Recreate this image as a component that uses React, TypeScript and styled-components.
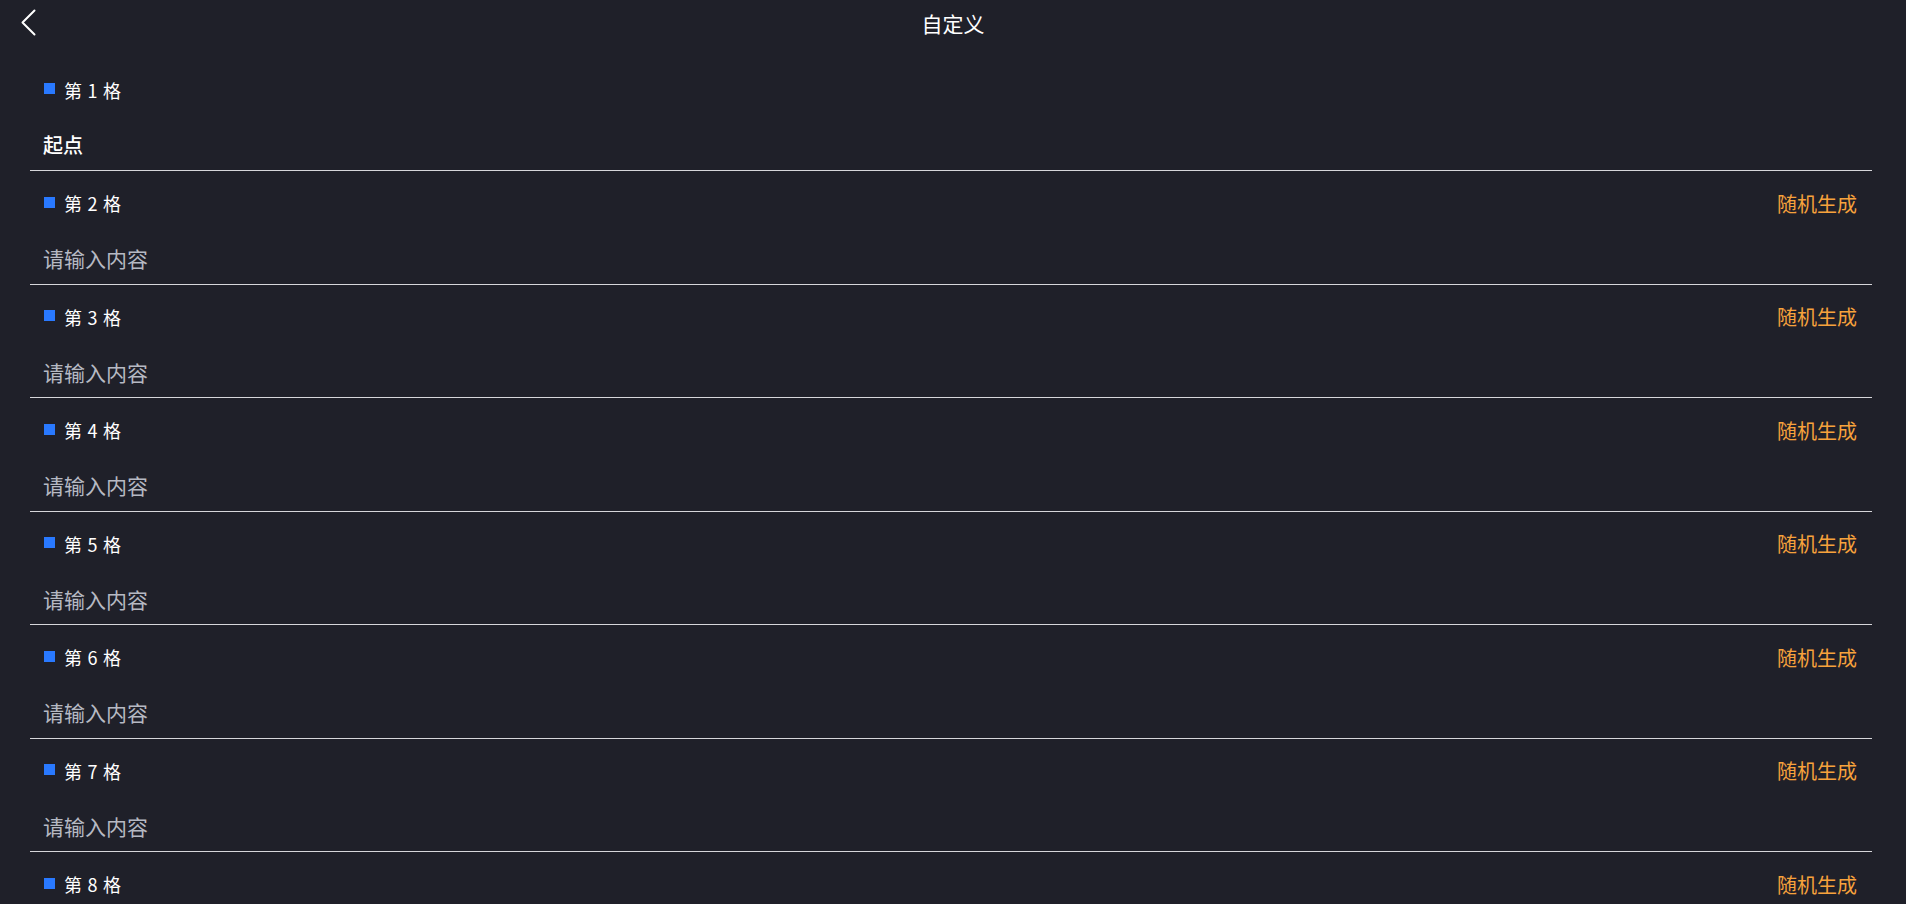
import React from "react";
import styled, { createGlobalStyle } from "styled-components";

const GlobalStyle = createGlobalStyle`
  html, body {
    margin: 0;
    padding: 0;
    background: #1f2029;
    overflow: hidden;
  }
  * {
    box-sizing: border-box;
  }
`;

const Page = styled.div`
  width: 100%;
  height: 904px;
  background: #1f2029;
  color: #ffffff;
  font-family: "Noto Sans CJK SC", "Noto Sans", sans-serif;
`;

const Header = styled.div`
  height: 46px;
  position: relative;
  display: flex;
  justify-content: center;
  align-items: center;
`;

const BackButton = styled.button`
  position: absolute;
  left: 16px;
  top: 6px;
  width: 26px;
  height: 32px;
  padding: 0;
  border: none;
  background: transparent;
  display: flex;
  align-items: center;
  justify-content: center;
  cursor: pointer;
`;

const Title = styled.h1`
  margin: 0;
  font-size: 21px;
  font-weight: 400;
  color: #ffffff;
`;

const List = styled.ul`
  list-style: none;
  margin: 0;
  padding: 11.5px 34px 0 30px;
`;

const Cell = styled.li`
  height: 113.5px;
  padding: 9px 15px 0 13px;
  border-bottom: 1px solid #d6d6da;
  display: flex;
  flex-direction: column;
`;

const CellHead = styled.div`
  height: 46px;
  display: flex;
  align-items: center;
  justify-content: space-between;
`;

const CellLabel = styled.div`
  display: flex;
  align-items: center;
  gap: 9px;
  font-size: 18px;
  font-weight: 400;
  color: #ffffff;
  word-spacing: 1.5px;
`;

const Dot = styled.span`
  width: 11px;
  height: 11px;
  margin-left: 1px;
  margin-top: -2px;
  background: #2979ff;
`;

const RandomLink = styled.button`
  border: none;
  background: transparent;
  padding: 0;
  font-family: inherit;
  font-size: 20px;
  color: #f7a23c;
  cursor: pointer;
`;

const CellBody = styled.div`
  height: 46px;
  margin-top: 9px;
  display: flex;
  align-items: center;
`;

const FixedText = styled.span`
  font-size: 20px;
  font-weight: 500;
  color: #ffffff;
`;

const ContentInput = styled.input`
  width: 100%;
  height: 100%;
  border: none;
  outline: none;
  padding: 0;
  background: transparent;
  font-family: inherit;
  font-size: 21px;
  color: #ffffff;
  &::placeholder {
    color: #b6b9c3;
  }
`;

const BackIcon = () => (
  <svg width="26" height="32" viewBox="0 0 26 32" fill="none">
    <path d="M18.5 4.5 L6.5 16.5 L18.5 28.5" stroke="#ffffff" strokeWidth="2" strokeLinecap="round" strokeLinejoin="round" />
  </svg>
);

const cells = [2, 3, 4, 5, 6, 7, 8];

const App = () => {
  return (
    <Page>
      <GlobalStyle />
      <Header>
        <BackButton aria-label="返回">
          <BackIcon />
        </BackButton>
        <Title>自定义</Title>
      </Header>
      <List>
        <Cell>
          <CellHead>
            <CellLabel>
              <Dot />
              第 1 格
            </CellLabel>
          </CellHead>
          <CellBody>
            <FixedText>起点</FixedText>
          </CellBody>
        </Cell>
        {cells.map((n) => (
          <Cell key={n}>
            <CellHead>
              <CellLabel>
                <Dot />
                第 {n} 格
              </CellLabel>
              <RandomLink>随机生成</RandomLink>
            </CellHead>
            <CellBody>
              <ContentInput placeholder="请输入内容" />
            </CellBody>
          </Cell>
        ))}
      </List>
    </Page>
  );
};

export default App;
